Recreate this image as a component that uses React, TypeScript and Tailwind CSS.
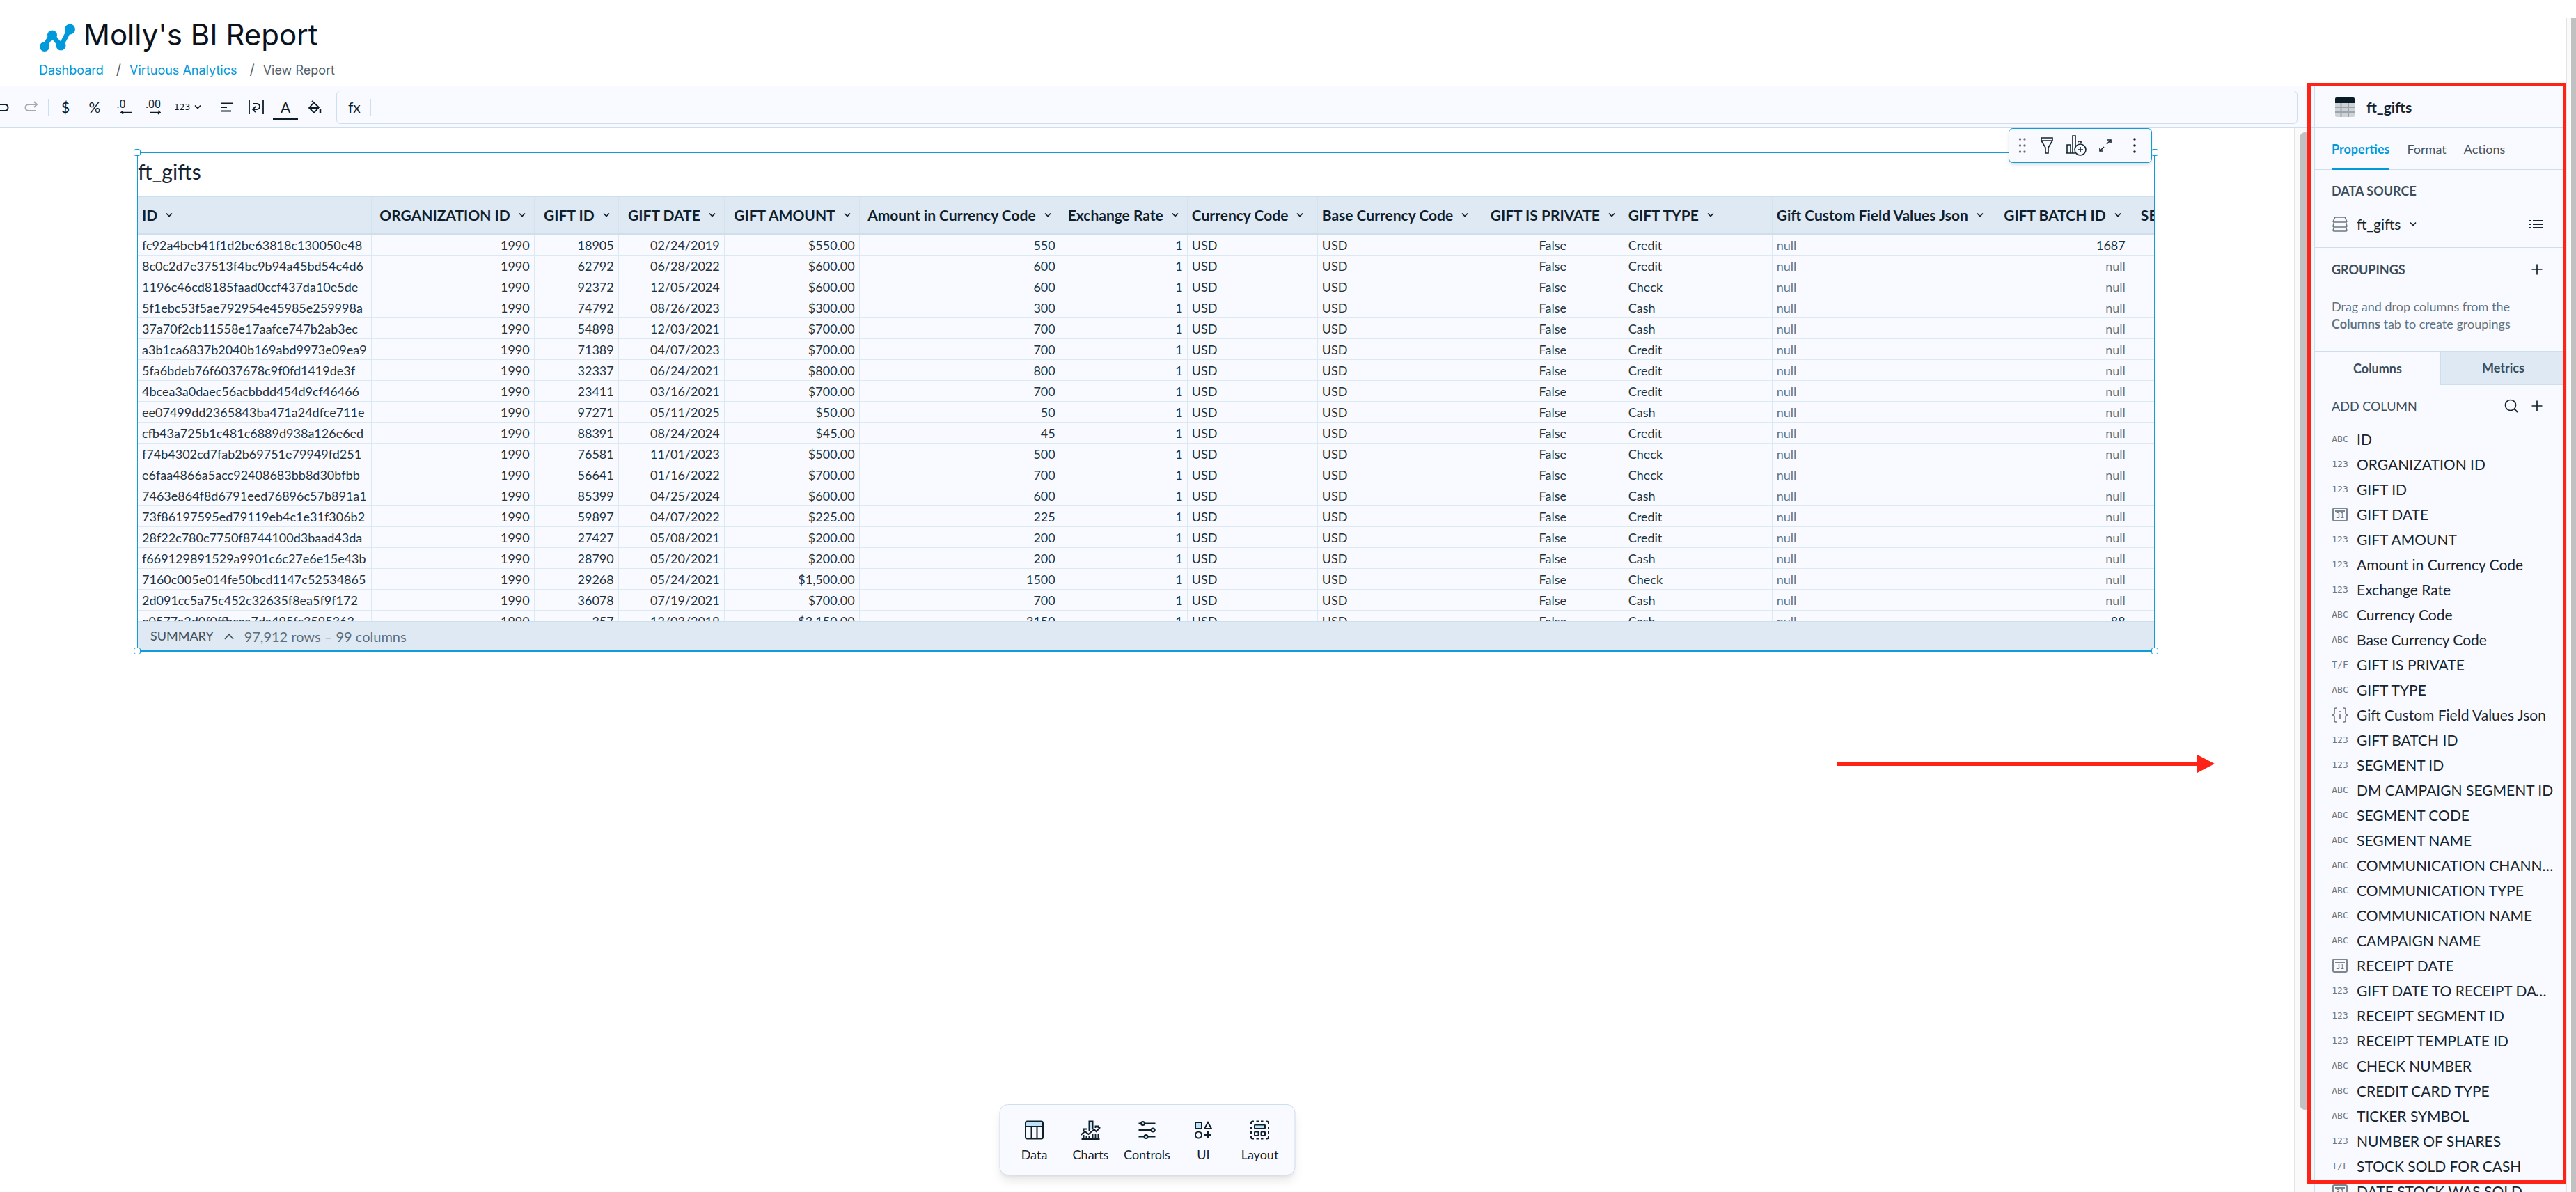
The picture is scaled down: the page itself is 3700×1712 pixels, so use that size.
import type { ReactNode } from 'react'

type Align = 'left' | 'right' | 'center'
type ColumnType = 'text' | 'number' | 'date' | 'bool' | 'json'

interface Column {
  name: string
  width: number
  align: Align
}

const COLUMNS: Column[] = [
  { name: 'ID', width: 335, align: 'left' },
  { name: 'ORGANIZATION ID', width: 234, align: 'right' },
  { name: 'GIFT ID', width: 121, align: 'right' },
  { name: 'GIFT DATE', width: 152, align: 'right' },
  { name: 'GIFT AMOUNT', width: 194, align: 'right' },
  { name: 'Amount in Currency Code', width: 288, align: 'right' },
  { name: 'Exchange Rate', width: 183, align: 'right' },
  { name: 'Currency Code', width: 187, align: 'left' },
  { name: 'Base Currency Code', width: 236, align: 'left' },
  { name: 'GIFT IS PRIVATE', width: 204, align: 'center' },
  { name: 'GIFT TYPE', width: 213, align: 'left' },
  { name: 'Gift Custom Field Values Json', width: 320, align: 'left' },
  { name: 'GIFT BATCH ID', width: 194, align: 'right' },
  { name: 'SEGMENT ID', width: 176, align: 'right' },
]

// id, gift id, date, amount, type, batch
const GIFTS: [string, string, string, number, string, string][] = [
  ['fc92a4beb41f1d2be63818c130050e48', '18905', '02/24/2019', 550, 'Credit', '1687'],
  ['8c0c2d7e37513f4bc9b94a45bd54c4d6', '62792', '06/28/2022', 600, 'Credit', 'null'],
  ['1196c46cd8185faad0ccf437da10e5de', '92372', '12/05/2024', 600, 'Check', 'null'],
  ['5f1ebc53f5ae792954e45985e259998a', '74792', '08/26/2023', 300, 'Cash', 'null'],
  ['37a70f2cb11558e17aafce747b2ab3ec', '54898', '12/03/2021', 700, 'Cash', 'null'],
  ['a3b1ca6837b2040b169abd9973e09ea9', '71389', '04/07/2023', 700, 'Credit', 'null'],
  ['5fa6bdeb76f6037678c9f0fd1419de3f', '32337', '06/24/2021', 800, 'Credit', 'null'],
  ['4bcea3a0daec56acbbdd454d9cf46466', '23411', '03/16/2021', 700, 'Credit', 'null'],
  ['ee07499dd2365843ba471a24dfce711e', '97271', '05/11/2025', 50, 'Cash', 'null'],
  ['cfb43a725b1c481c6889d938a126e6ed', '88391', '08/24/2024', 45, 'Credit', 'null'],
  ['f74b4302cd7fab2b69751e79949fd251', '76581', '11/01/2023', 500, 'Check', 'null'],
  ['e6faa4866a5acc92408683bb8d30bfbb', '56641', '01/16/2022', 700, 'Check', 'null'],
  ['7463e864f8d6791eed76896c57b891a1', '85399', '04/25/2024', 600, 'Cash', 'null'],
  ['73f86197595ed79119eb4c1e31f306b2', '59897', '04/07/2022', 225, 'Credit', 'null'],
  ['28f22c780c7750f8744100d3baad43da', '27427', '05/08/2021', 200, 'Credit', 'null'],
  ['f669129891529a9901c6c27e6e15e43b', '28790', '05/20/2021', 200, 'Cash', 'null'],
  ['7160c005e014fe50bcd1147c52534865', '29268', '05/24/2021', 1500, 'Check', 'null'],
  ['2d091cc5a75c452c32635f8ea5f9f172', '36078', '07/19/2021', 700, 'Cash', 'null'],
  ['e0577a2d0f0ffbcaa7da495fc3595363', '357', '12/03/2019', 3150, 'Cash', '88'],
]

const FIELDS: [ColumnType, string][] = [
  ['text', 'ID'],
  ['number', 'ORGANIZATION ID'],
  ['number', 'GIFT ID'],
  ['date', 'GIFT DATE'],
  ['number', 'GIFT AMOUNT'],
  ['number', 'Amount in Currency Code'],
  ['number', 'Exchange Rate'],
  ['text', 'Currency Code'],
  ['text', 'Base Currency Code'],
  ['bool', 'GIFT IS PRIVATE'],
  ['text', 'GIFT TYPE'],
  ['json', 'Gift Custom Field Values Json'],
  ['number', 'GIFT BATCH ID'],
  ['number', 'SEGMENT ID'],
  ['text', 'DM CAMPAIGN SEGMENT ID'],
  ['text', 'SEGMENT CODE'],
  ['text', 'SEGMENT NAME'],
  ['text', 'COMMUNICATION CHANNEL'],
  ['text', 'COMMUNICATION TYPE'],
  ['text', 'COMMUNICATION NAME'],
  ['text', 'CAMPAIGN NAME'],
  ['date', 'RECEIPT DATE'],
  ['number', 'GIFT DATE TO RECEIPT DATE DAYS'],
  ['number', 'RECEIPT SEGMENT ID'],
  ['number', 'RECEIPT TEMPLATE ID'],
  ['text', 'CHECK NUMBER'],
  ['text', 'CREDIT CARD TYPE'],
  ['text', 'TICKER SYMBOL'],
  ['number', 'NUMBER OF SHARES'],
  ['bool', 'STOCK SOLD FOR CASH'],
  ['date', 'DATE STOCK WAS SOLD'],
]

const CELL_ALIGN: Record<Align, string> = {
  left: 'text-left',
  right: 'text-right',
  center: 'text-center',
}

const HEAD_ALIGN: Record<Align, string> = {
  left: 'justify-start pl-[6px]',
  right: 'justify-end pr-3',
  center: 'justify-center',
}

function toCells([id, giftId, date, amount, type, batch]: (typeof GIFTS)[number]) {
  const money = amount.toLocaleString('en-US', { style: 'currency', currency: 'USD' })
  return [id, '1990', giftId, date, money, String(amount), '1', 'USD', 'USD', 'False', type, 'null', batch, '']
}

function Icon({ w, h, children, className = '' }: { w: number; h: number; children: ReactNode; className?: string }) {
  return (
    <svg
      width={w}
      height={h}
      viewBox={`0 0 ${w} ${h}`}
      fill="none"
      stroke="currentColor"
      strokeWidth={2}
      className={`shrink-0 ${className}`}
      aria-hidden="true"
    >
      {children}
    </svg>
  )
}

function ChevronDown({ className = '' }: { className?: string }) {
  return (
    <Icon w={10} h={10} className={className}>
      <path d="M1 2.500l4 4 4-4" strokeWidth={1.600} />
    </Icon>
  )
}

function PlusIcon() {
  return (
    <Icon w={18} h={18}>
      <path d="M9 1.500v15M1.500 9h15" strokeWidth={1.700} />
    </Icon>
  )
}

function PageHeader() {
  return (
    <header className="h-[124px] shrink-0 pl-[56px] pt-[25px] font-[Inter,sans-serif]">
      <div className="flex h-[50px] items-center gap-3">
        <svg width="52" height="48" viewBox="0 0 52 48" className="text-[#0099dc]" aria-hidden="true">
          <path d="M7.500 41L18.500 24L31.500 40L44.500 15" fill="none" stroke="currentColor" strokeWidth="7" strokeLinejoin="round" />
          <g fill="currentColor">
            <circle cx="8" cy="41" r="7" />
            <circle cx="19" cy="24.500" r="7" />
            <circle cx="31.500" cy="39.500" r="7" />
            <circle cx="44.500" cy="16" r="7.500" />
          </g>
        </svg>
        <h1 className="text-[42px] leading-none text-[#0b121b]">Molly's BI Report</h1>
      </div>
      <nav aria-label="Breadcrumb" className="mt-[13px] flex h-6 items-center text-[18px] text-[#55626d]">
        <a href="#dashboard" className="text-[#0099dc]">Dashboard</a>
        <span className="pl-[18px] pr-3 text-[20px]">/</span>
        <a href="#analytics" className="text-[#0099dc]">Virtuous Analytics</a>
        <span className="pl-[18px] pr-3 text-[20px]">/</span>
        <span>View Report</span>
      </nav>
    </header>
  )
}

function ToolButton({ label, children, className = 'w-[42px]' }: { label: string; children: ReactNode; className?: string }) {
  return (
    <button aria-label={label} className={`flex h-10 shrink-0 items-center justify-center ${className}`}>
      {children}
    </button>
  )
}

function Separator() {
  return <span className="mx-[3px] h-6 w-px shrink-0 bg-[#cddfee]" />
}

function Toolbar() {
  return (
    <div className="flex h-[60px] shrink-0 items-center border-b border-[#cddfee] bg-[#f9faff] pr-6 text-[#0d1d28]">
      <ToolButton label="Undo" className="-ml-[18px] w-[42px]">
        <Icon w={20} h={18}>
          <path d="M6 1L2 5l4 4M2 5h12a4 4 0 0 1 0 9H3" />
        </Icon>
      </ToolButton>
      <ToolButton label="Redo">
        <Icon w={20} h={18} className="text-[#a3a9ae]">
          <path d="M14 1l4 4-4 4M18 5H6a4 4 0 0 0 0 9h11" />
        </Icon>
      </ToolButton>
      <Separator />
      <ToolButton label="Currency"><span className="text-[21px]">$</span></ToolButton>
      <ToolButton label="Percent"><span className="text-[21px]">%</span></ToolButton>
      <ToolButton label="Decrease decimals">
        <span className="flex flex-col items-end">
          <span className="pr-2 font-[Roboto] text-[16px] leading-[16px]">.0</span>
          <Icon w={16} h={7}><path d="M4 1L1 3.500L4 6M1 3.500h15" strokeWidth={1.600} /></Icon>
        </span>
      </ToolButton>
      <ToolButton label="Increase decimals">
        <span className="flex flex-col items-end">
          <span className="font-[Roboto] text-[16px] leading-[16px]">.00</span>
          <Icon w={16} h={7}><path d="M12 1l3 2.500L12 6M0 3.500h15" strokeWidth={1.600} /></Icon>
        </span>
      </ToolButton>
      <ToolButton label="Number format" className="w-[57px] gap-[6px]">
        <span className="font-[DejaVu_Sans_Mono] text-[13px]">123</span>
        <ChevronDown />
      </ToolButton>
      <Separator />
      <ToolButton label="Align">
        <Icon w={18} h={14}><path d="M0 1.500h18M0 7h9M0 12.500h15" /></Icon>
      </ToolButton>
      <ToolButton label="Wrap text">
        <Icon w={24} h={22}>
          <path d="M2 1v20M22 1v20M8 6h5a4 4 0 0 1 0 8H8M11 10l-4 4 4 4" strokeWidth={1.800} />
        </Icon>
      </ToolButton>
      <ToolButton label="Text color">
        <span className="flex h-9 w-9 items-center justify-center border-b-3 border-[#0d1d28] pt-1 text-[21px]">A</span>
      </ToolButton>
      <ToolButton label="Fill color">
        <Icon w={20} h={20}>
          <path d="M6 1l10 9-7 8-7-7 6-7M2 11h14" strokeWidth={1.800} />
          <path d="M18 13v5" strokeWidth={2.500} />
        </Icon>
      </ToolButton>
      <label className="ml-[10px] flex h-12 min-w-0 flex-1 items-center rounded-md border border-[#cddfee]">
        <span className="w-12 pl-4 text-[21px] leading-none">fx</span>
        <span className="h-6 w-px bg-[#cddfee]" />
        <input aria-label="Formula" className="h-full min-w-0 flex-1 bg-transparent px-3 text-[18px] outline-none" />
      </label>
    </div>
  )
}

function WidgetMenu() {
  return (
    <div className="absolute -top-[36px] right-[3px] z-10 flex h-[50px] w-[206px] items-center rounded-md border border-[#109cdb] bg-[#f9faff] text-[#15252f] shadow-md">
      <button aria-label="Drag" className="ml-[13px]">
        <svg width="12" height="22" fill="#6b757d" aria-hidden="true">
          {[2, 11, 20].map((y) => (
            <g key={y}>
              <circle cx="2.500" cy={y} r="1.700" />
              <circle cx="9" cy={y} r="1.700" />
            </g>
          ))}
        </svg>
      </button>
      <button aria-label="Filter" className="ml-[19px]">
        <Icon w={20} h={26}><path d="M2 2h16v4l-6 10v8H8v-8L2 6zM2 6h16" strokeWidth={1.600} /></Icon>
      </button>
      <button aria-label="Add chart" className="ml-4">
        <Icon w={32} h={30}>
          <path d="M1 26h13M3 26V14h5v12M11 26V1h4v14M19 10.500V9h4v2" strokeWidth={1.600} />
          <circle cx="22" cy="21" r="8" strokeWidth={1.600} />
          <path d="M22 17v8M18 21h8" strokeWidth={1.600} />
        </Icon>
      </button>
      <button aria-label="Expand" className="ml-4">
        <Icon w={20} h={20}><path d="M12 8l6-6M13 2h5v5M8 12l-6 6M2 13v5h5" strokeWidth={1.600} /></Icon>
      </button>
      <button aria-label="More" className="ml-[29px]">
        <svg width="6" height="22" fill="currentColor" aria-hidden="true">
          <circle cx="3" cy="2" r="1.800" />
          <circle cx="3" cy="11" r="1.800" />
          <circle cx="3" cy="20" r="1.800" />
        </svg>
      </button>
    </div>
  )
}

function ResizeHandles() {
  const base = 'absolute h-[10px] w-[10px] rounded-[3px] border border-[#109cdb] bg-white'
  return (
    <>
      <span className={`${base} -left-[6px] -top-[6px]`} />
      <span className={`${base} -right-[6px] -top-[6px]`} />
      <span className={`${base} -bottom-[6px] -left-[6px]`} />
      <span className={`${base} -bottom-[6px] -right-[6px]`} />
    </>
  )
}

function GiftsTable() {
  return (
    <table className="w-max table-fixed border-separate border-spacing-0">
      <colgroup>
        {COLUMNS.map((c) => <col key={c.name} style={{ width: c.width }} />)}
      </colgroup>
      <thead>
        <tr className="bg-[#dee9f3]">
          {COLUMNS.map((c) => (
            <th
              key={c.name}
              scope="col"
              className="h-[55px] border-b-3 border-r border-t border-b-[#cddeec] border-r-[#d3e4ef] border-t-[#cddeec] p-0 text-[21px] font-bold text-[#0f202b]"
            >
              <button className={`flex w-full items-center gap-3 whitespace-nowrap ${HEAD_ALIGN[c.align]}`}>
                {c.name}
                <ChevronDown />
              </button>
            </th>
          ))}
        </tr>
      </thead>
      <tbody>
        {GIFTS.map((gift) => (
          <tr key={gift[0]}>
            {toCells(gift).map((value, i) => (
              <td
                key={COLUMNS[i].name}
                className={`h-[30px] whitespace-nowrap border-b border-r border-[#dbe9f2] px-[6px] py-0 text-[18px] leading-6 ${CELL_ALIGN[COLUMNS[i].align]} ${value === 'null' ? 'text-[#62747f]' : 'text-[#20323e]'}`}
              >
                {value}
              </td>
            ))}
          </tr>
        ))}
      </tbody>
    </table>
  )
}

function GiftsWidget() {
  return (
    <section className="relative mr-[200px] ml-[197px] mt-[34px] border-x border-y-2 border-[#109cdb]">
      <h2 className="h-[62px] pt-2 text-[30px] leading-[36px] text-[#15242e]">ft_gifts</h2>
      <div className="h-[610px] overflow-hidden bg-[#f9faff]">
        <GiftsTable />
      </div>
      <footer className="flex h-[42px] items-center border-t border-[#cddeec] bg-[#dee9f3] pl-[18px] text-[#5c6f7b]">
        <button className="flex items-center gap-[14px] text-[18px] text-[#3c505c]">
          SUMMARY
          <Icon w={16} h={12}><path d="M2 10l6-7 6 7" strokeWidth={1.600} /></Icon>
        </button>
        <span className="pl-[14px] text-[20px]">97,912 rows – 99 columns</span>
      </footer>
      <ResizeHandles />
      <WidgetMenu />
    </section>
  )
}

const BLUE = '#bfe3f6'

const DOCK: { label: string; icon: ReactNode }[] = [
  {
    label: 'Data',
    icon: (
      <>
        <path d="M2 3q0-1 1-1h22q1 0 1 1v6H2z" fill={BLUE} stroke="none" />
        <rect x="1.500" y="1.500" width="25" height="25" rx="2.500" />
        <path d="M2 9h24M10 9v17M18 9v17" />
      </>
    ),
  },
  {
    label: 'Charts',
    icon: (
      <>
        <path d="M12 15V1.500h5V12M4 15v-2.500h4v1M21 11V8.500h4V11" fill={BLUE} />
        <path d="M0 21l6-5 5 4 8-7 3 3 6-6" />
        <path d="M1 27h26M4 27v-6M8 27v-5M12 27v-5M17 27v-8M21 27v-7M25 27v-8" />
      </>
    ),
  },
  {
    label: 'Controls',
    icon: (
      <>
        <path d="M2 4.500h24M2 14h24M2 23.500h24" />
        <g fill={BLUE}>
          <circle cx="8" cy="4.500" r="2.500" />
          <circle cx="22.500" cy="14" r="2.500" />
          <circle cx="12.500" cy="23.500" r="2.500" />
        </g>
      </>
    ),
  },
  {
    label: 'UI',
    icon: (
      <>
        <rect x="2.500" y="3" width="9" height="9" rx="1" fill={BLUE} />
        <path d="M20.500 3l5 9h-10zM20.500 16v10M15.500 21h10" />
        <circle cx="7" cy="21" r="4.500" />
      </>
    ),
  },
  {
    label: 'Layout',
    icon: (
      <>
        <path d="M1.500 5.500V4q0-2.500 2.500-2.500h1.500M22.500 1.500H24q2.500 0 2.500 2.500v1.500M26.500 22.500V24q0 2.500-2.500 2.500h-1.500M5.500 26.500H4q-2.500 0-2.500-2.500v-1.500" />
        <path d="M9 1.500h3.500M15.500 1.500H19M9 26.500h3.500M15.500 26.500H19M1.500 9v3.500M1.500 15.500V19M26.500 9v3.500M26.500 15.500V19" />
        <rect x="6.500" y="6.500" width="15" height="5.500" rx="1" fill={BLUE} />
        <rect x="6.500" y="16.500" width="5.500" height="5.500" rx="1" />
        <rect x="16" y="16.500" width="5.500" height="5.500" rx="1" />
      </>
    ),
  },
]

function ElementDock() {
  return (
    <div className="absolute bottom-6 left-1/2 flex h-[102px] -translate-x-1/2 items-center rounded-xl border border-[#cddfee] bg-[#f9faff] px-[9px] pt-1 shadow-lg">
      {DOCK.map(({ label, icon }) => (
        <button key={label} className="flex w-[81px] flex-col items-center gap-[9px] text-[18px] leading-6 text-[#0f202b]">
          <Icon w={28} h={28}>{icon}</Icon>
          {label}
        </button>
      ))}
    </div>
  )
}

function CalloutArrow() {
  return (
    <svg width="543" height="26" viewBox="0 0 543 26" className="absolute right-[114px] top-[900px]" aria-hidden="true">
      <path d="M0 11h518V0l25 13-25 13V16H0z" fill="#ff2216" />
    </svg>
  )
}

function Canvas() {
  return (
    <div className="flex min-h-0 flex-1">
      <main className="relative min-w-0 flex-1">
        <GiftsWidget />
        <CalloutArrow />
        <ElementDock />
      </main>
      <div className="w-[29px] border-l-2 border-[#e4e4e4] bg-[#fafafa] pb-[118px] pl-[6px] pt-[6px]">
        <div className="h-full w-4 rounded-full bg-[#c1c1c1]" />
      </div>
    </div>
  )
}

function TypeIcon({ type }: { type: ColumnType }) {
  if (type === 'date') {
    return (
      <span className="flex h-[20px] w-[22px] items-end justify-center rounded-[3px] border-2 border-[#7c868e] font-[DejaVu_Sans_Mono] text-[10px] leading-[12px]">
        <span className="w-[14px] border-t-2 border-[#7c868e] text-center">31</span>
      </span>
    )
  }
  if (type === 'json') {
    return (
      <Icon w={24} h={22}>
        <path d="M7 1H6q-2 0-2 2v5q0 3-3 3 3 0 3 3v5q0 2 2 2h1M17 1h1q2 0 2 2v5q0 3 3 3-3 0-3 3v5q0 2-2 2h-1M12 9v8M12 5v2" strokeWidth={1.600} />
      </Icon>
    )
  }
  return (
    <span className="font-[DejaVu_Sans_Mono] text-[13px]">
      {type === 'text' ? 'ABC' : type === 'bool' ? 'T/F' : '123'}
    </span>
  )
}

function DataSource() {
  return (
    <section className="h-[112px] shrink-0 border-b border-[#cddfee] pl-6 pr-[32px] pt-[18px]">
      <h3 className="text-[18px] font-bold leading-6 text-[#3c4f5b]">DATA SOURCE</h3>
      <div className="mt-5 flex h-[32px] items-center">
        <label className="flex items-center">
          <Icon w={24} h={24} className="text-[#6d7880]">
            <path
              d="M5 2h14l3 6-1 1H3L2 8zM3.500 9L2 15l1 1h18l1-1-1.500-6M3.500 16L2 21l1 1h18l1-1-1.500-5"
              strokeWidth={1.600}
              strokeLinejoin="round"
            />
          </Icon>
          <select aria-label="Data source" className="ml-3 w-[76px] appearance-none bg-transparent text-[21px] text-[#15242e]">
            <option>ft_gifts</option>
          </select>
          <ChevronDown />
        </label>
        <button aria-label="View source columns" className="ml-auto">
          <Icon w={20} h={16}><path d="M0 3h3M5 3h15M0 8h3M5 8h15M0 13h3M5 13h15" strokeWidth={1.800} /></Icon>
        </button>
      </div>
    </section>
  )
}

function Sidebar() {
  return (
    <aside className="flex w-[361px] shrink-0 flex-col overflow-hidden border-l border-[#cddfee] bg-[#f9faff] text-[#15242e]">
      <div className="flex h-[60px] shrink-0 items-center gap-[17px] border-b border-[#cddfee] pl-[29px]">
        <svg width="28" height="28" viewBox="0 0 28 28" aria-hidden="true">
          <rect width="28" height="28" rx="2" fill="#cdd2d7" />
          <path d="M0 14h28M0 21h28M8.500 8v20M19 8v20" stroke="#9da4aa" strokeWidth="2" />
          <path d="M0 8V2q0-2 2-2h24q2 0 2 2v6z" fill="#0b1b26" />
        </svg>
        <h2 className="text-[21px] font-bold">ft_gifts</h2>
      </div>
      <div role="tablist" className="flex h-[60px] shrink-0 gap-[25px] border-b border-[#cddfee] pl-6 text-[18px] text-[#44555f]">
        <button role="tab" aria-selected="true" className="-mb-px border-b-3 border-[#0099dc] pt-1 font-bold text-[#0099dc]">Properties</button>
        <button role="tab" aria-selected="false" className="pt-px">Format</button>
        <button role="tab" aria-selected="false" className="pt-px">Actions</button>
      </div>
      <DataSource />
      <section className="h-[149px] shrink-0 border-b border-[#cddfee] pl-6 pr-[32px] pt-[19px]">
        <div className="flex h-6 items-center justify-between">
          <h3 className="text-[18px] font-bold text-[#3c4f5b]">GROUPINGS</h3>
          <button aria-label="Add grouping"><PlusIcon /></button>
        </div>
        <p className="mt-[29px] text-[18px] leading-[25px] text-[#62747f]">
          Drag and drop columns from the <b>Columns</b> tab to create groupings
        </p>
      </section>
      <div role="tablist" className="grid h-12 shrink-0 grid-cols-2 text-[18px] font-bold text-[#3c4f5b]">
        <button role="tab" aria-selected="true">Columns</button>
        <button role="tab" aria-selected="false" className="border-b border-l border-[#cddfee] bg-[#dee9f3]">Metrics</button>
      </div>
      <div className="flex h-[60px] shrink-0 items-center pl-6 pr-[32px]">
        <h3 className="text-[18px] text-[#3c4f5b]">ADD COLUMN</h3>
        <button aria-label="Search columns" className="ml-auto mr-[18px]">
          <Icon w={20} h={20}>
            <circle cx="9" cy="9" r="7.500" strokeWidth={1.700} />
            <path d="M14 14l5 5" />
          </Icon>
        </button>
        <button aria-label="Add column"><PlusIcon /></button>
      </div>
      <ul>
        {FIELDS.map(([type, name]) => (
          <li key={name} className="flex h-9 items-center pl-6 pr-4">
            <span className="flex w-6 shrink-0 justify-center text-[#6d7880]"><TypeIcon type={type} /></span>
            <span className="ml-3 truncate text-[21px] leading-[30px]">{name}</span>
          </li>
        ))}
      </ul>
    </aside>
  )
}

export default function App() {
  return (
    <div className="relative flex h-screen overflow-hidden bg-white font-[Lato,sans-serif]">
      <div className="flex min-w-0 flex-1 flex-col">
        <PageHeader />
        <div className="flex min-h-0 flex-1">
          <div className="flex min-w-0 flex-1 flex-col">
            <Toolbar />
            <Canvas />
          </div>
          <Sidebar />
        </div>
      </div>
      <div className="mt-[26px] w-[15px] shrink-0 border-l-2 border-[#e4e4e4] bg-[#fafafa] pl-[6px]">
        <div className="h-full bg-[#c1c1c1]" />
      </div>
      {/* callout around the properties panel */}
      <div className="pointer-events-none absolute bottom-3 right-[14px] top-[119px] w-[372px] border-5 border-[#ff2216]" />
    </div>
  )
}
